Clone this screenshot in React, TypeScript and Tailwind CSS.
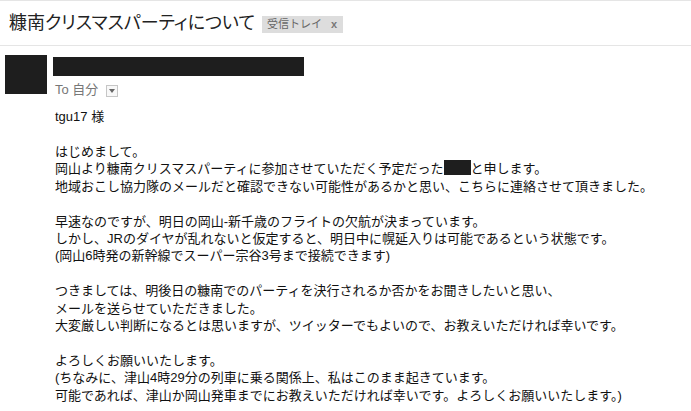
import React from "react";

const jp = "font-['Liberation_Sans','Noto_Sans_CJK_JP',sans-serif]";

export default function App() {
  return (
    <div className={`w-[691px] h-[411px] bg-white overflow-hidden ${jp} text-[#222]`}>
      <div className="border-t border-[#e5e5e5] h-[1px]" />
      <div className="flex items-center h-[45px] pl-[9px] border-b border-[#e5e5e5]">
        <h1 className="text-[18px] font-normal text-[#222] [font-feature-settings:'palt']">
          糠南クリスマスパーティについて
        </h1>
        <span className="ml-[7px] mt-[2px] flex items-center h-[17px] bg-[#dddddd] text-[#666] text-[11px] pl-[5px] pr-[6px]">
          <span>受信トレイ</span>
          <span className="ml-[9px] text-[#777] text-[11px] font-bold">x</span>
        </span>
      </div>
      <div className="flex pt-[9px] pl-[5px]">
        <div className="w-[42px] h-[39px] bg-[#1e1e1e]" />
        <div className="ml-[6px]">
          <div className="w-[251px] h-[19px] bg-[#1e1e1e] mt-[2px]" />
          <div className="flex items-center mt-[4px] text-[13px] text-[#777]">
            <span className="ml-[2px]">To 自分</span>
            <span className="ml-[8px] mt-[2px] w-[12px] h-[12px] border border-[#c6c6c6] flex items-center justify-center bg-[#f8f8f8]">
              <svg width="6" height="4" viewBox="0 0 6 4">
                <path d="M0 0 L6 0 L3 4 Z" fill="#666" />
              </svg>
            </span>
          </div>
        </div>
      </div>
      <div className="pl-[55px] pt-[8px] text-[13px] leading-[17.4px] text-[#111]">
        <div>tgu17 様</div>
        <div className="h-[18px]" />
        <div>はじめまして。</div>
        <div>
          岡山より糠南クリスマスパーティに参加させていただく予定だった
          <span className="inline-block align-[-2px] w-[27px] h-[15px] bg-[#1e1e1e]" />
          と申します。
        </div>
        <div>地域おこし協力隊のメールだと確認できない可能性があるかと思い、こちらに連絡させて頂きました。</div>
        <div className="h-[17.4px]" />
        <div>早速なのですが、明日の岡山-新千歳のフライトの欠航が決まっています。</div>
        <div>しかし、JRのダイヤが乱れないと仮定すると、明日中に幌延入りは可能であるという状態です。</div>
        <div>(岡山6時発の新幹線でスーパー宗谷3号まで接続できます)</div>
        <div className="h-[17.4px]" />
        <div>つきましては、明後日の糠南でのパーティを決行されるか否かをお聞きしたいと思い、</div>
        <div>メールを送らせていただきました。</div>
        <div>大変厳しい判断になるとは思いますが、ツイッターでもよいので、お教えいただければ幸いです。</div>
        <div className="h-[17.4px]" />
        <div>よろしくお願いいたします。</div>
        <div>(ちなみに、津山4時29分の列車に乗る関係上、私はこのまま起きています。</div>
        <div>可能であれば、津山か岡山発車までにお教えいただければ幸いです。よろしくお願いいたします。)</div>
      </div>
    </div>
  );
}
